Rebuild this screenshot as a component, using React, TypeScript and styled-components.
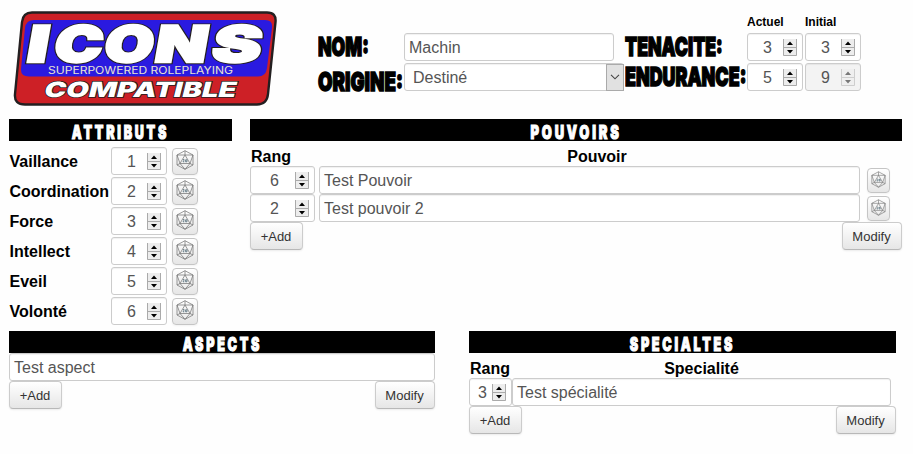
import React from 'react';
import styled, { createGlobalStyle } from 'styled-components';

const Global = createGlobalStyle`
  * { box-sizing: border-box; }
  body { margin: 0; background: #fefefe; color: #000; font: 16px/20px "Liberation Sans", Arial, sans-serif; overflow: hidden; }
`;

const Sheet = styled.main`
  width: 913px;
  height: 454px;
  padding: 11px 0 0 9px;
`;

const Header = styled.header`
  display: flex;
  height: 108px;
`;

const LogoArt = styled.svg`
  display: block;
  width: 264px;
  height: 96px;
  margin: 0 44px 0 4px;
  flex: none;
`;

const Fields = styled.div`
  display: grid;
  grid-template-columns: 83px 222px 121px 58px 58px;
  grid-template-rows: 22px 30px 30px;
`;

const Caption = styled.b`
  font-size: 12px;
  line-height: 22px;
`;

const Poster = styled.span<{ $size: number; $stretch: number; $gap?: number; $ink?: number }>`
  display: inline-block;
  white-space: nowrap;
  font-family: Inter, "Liberation Sans", sans-serif;
  font-weight: 900;
  font-size: ${p => p.$size}px;
  letter-spacing: ${p => p.$gap ?? 0}px;
  transform: scaleX(${p => p.$stretch});
  -webkit-text-stroke: ${p => p.$ink ?? 1.5}px currentColor;
`;

const FieldLabel = styled.div<{ $drop?: number; $shift?: number }>`
  width: 0;
  line-height: 28px;
  padding-top: ${p => p.$drop ?? 0}px;
  margin-left: ${p => p.$shift ?? -3}px;
  & > span { transform-origin: left; }
`;

const Box = styled.div<{ $w: number; $off?: boolean; $indent?: number }>`
  display: flex;
  align-items: center;
  flex: none;
  width: ${p => p.$w}px;
  height: 28px;
  padding: 1px 0 0 ${p => p.$indent ?? 4}px;
  border: 1px solid #ccc;
  border-radius: 3px;
  background: ${p => (p.$off ? '#f3f3f3' : '#fff')};
  color: #555;
  box-shadow: inset 0 1px 1px rgba(0, 0, 0, 0.06);
`;

const NumberBox = styled(Box)`
  justify-content: flex-end;
  padding: 1px 5px 0 0;
  gap: ${p => (p.$w < 50 ? 5 : p.$w > 60 ? 16 : 11)}px;
`;

const Arrows = styled.svg<{ $off?: boolean }>`
  width: 14px;
  height: 17px;
  margin-top: -1px;
  opacity: ${p => (p.$off ? 0.5 : 1)};
`;

const Picker = styled(Box)`
  justify-content: space-between;
`;

const PickerArrow = styled.span`
  display: flex;
  align-items: center;
  justify-content: center;
  width: 18px;
  height: 27px;
  margin: -1px -1px 0 0;
  border: 1px solid #aaa;
  background: #e1e1e1;
`;

const TopRow = styled.div`
  display: flex;
  gap: 18px;
  height: 212px;
`;

const BottomRow = styled.div`
  display: flex;
  gap: 34px;
`;

const Panel = styled.section<{ $w: number }>`
  width: ${p => p.$w}px;
`;

const Banner = styled.h2`
  margin: 0;
  height: 22px;
  line-height: 23px;
  background: #000;
  color: #fff;
  text-align: center;
`;

const AttributeList = styled.div`
  padding-top: 6px;
`;

const AttributeRow = styled.div`
  display: grid;
  grid-template-columns: 102px 61px 26px;
  height: 30px;
`;

const AttributeName = styled.b`
  padding-left: 0.5px;
  line-height: 29px;
  white-space: nowrap;
`;

const DieButton = styled.button<{ $w: number; $h: number }>`
  display: flex;
  align-items: center;
  justify-content: center;
  flex: none;
  width: ${p => p.$w}px;
  height: ${p => p.$h}px;
  margin: 1px 0 0;
  padding: 0 0 3px;
  border: 1px solid #c5c5c5;
  border-radius: 4px;
  background: linear-gradient(#fff, #e6e6e6);
  box-shadow: 0 1px 2px rgba(0, 0, 0, 0.05);
`;

const Columns = styled.div<{ $h: number; $first: number; $last: number }>`
  display: grid;
  grid-template-columns: ${p => p.$first}px 1fr ${p => p.$last}px;
  height: ${p => p.$h}px;
  padding: 6px 0 0 1px;
  font-weight: bold;
  & > :nth-child(2) { text-align: center; }
`;

const Entry = styled.div<{ $gap?: number }>`
  display: flex;
  gap: ${p => p.$gap ?? 0}px;
  height: 28px;
`;

const DieSlot = styled.div`
  padding: 1px 0 0 3px;
`;

const Actions = styled.div`
  display: flex;
  justify-content: space-between;
`;

const Action = styled.button<{ $w: number }>`
  width: ${p => p.$w}px;
  height: 28px;
  padding: 2px 1px 0 0;
  border: 1px solid #ccc;
  border-bottom-color: #b8b8b8;
  border-radius: 4px;
  background: linear-gradient(#fff, #e6e6e6);
  box-shadow: 0 1px 2px rgba(0, 0, 0, 0.08);
  color: #333;
  font: 13px/20px "Liberation Sans", Arial, sans-serif;
`;

function Num({ value, w = 56, off }: { value: number; w?: number; off?: boolean }) {
  return (
    <NumberBox $w={w} $off={off}>
      {value}
      <Arrows viewBox="0 0 14 17" $off={off}>
        <path d="M0 0h14v17H0z" fill="#ededed" />
        <path d="M.5 0v16.5h13V0M0 8.5h14" fill="none" stroke="#aaa" />
        <path d="M7 2.500 10 6H4zM4 11h6L7 14.500z" fill="#000" />
      </Arrows>
    </NumberBox>
  );
}

function Die({ small }: { small?: boolean }) {
  return (
    <DieButton $w={small ? 23 : 26} $h={small ? 25 : 27}>
      <svg width={small ? 15 : 18} height={small ? 17 : 20} viewBox="0 0 18 20" fill="none" stroke="#777" strokeWidth=".75" strokeLinejoin="round">
        <path d="M9 .7 17 5v10l-8 4.300L1 15V5z" />
        <path d="M9 5 4 13.500h10zM9 .7V5M9 5 1 5l3 8.500L1 15M9 5h8l-3 8.500 3 1.500M4 13.500l5 5.800 5-5.800" />
        <path d="M7 9.800q1.300-1.100 1.200.2L7 11.800h1.300M9.600 9.800h1.400v2H9.600z" stroke="#496471" />
      </svg>
    </DieButton>
  );
}

function Buttons() {
  return (
    <Actions>
      <Action $w={53}>+Add</Action>
      <Action $w={60}>Modify</Action>
    </Actions>
  );
}

const logoLetters = [
  { glyph: 'I', x: 25, width: 21 },
  { glyph: 'C', x: 52, width: 48 },
  { glyph: 'O', x: 102, width: 49 },
  { glyph: 'N', x: 153, width: 52 },
  { glyph: 'S', x: 210, width: 49 },
];

function Logo() {
  return (
    <LogoArt viewBox="13 11 264 96" role="img" aria-label="Icons superpowered roleplaying compatible">
      <path d="M32 12.500H267Q276.500 12.500 275.500 22L268 94Q267 104.500 257 104.500H25Q14 104.500 15 94L22 22Q23 12.500 32 12.500Z" fill="#cd2026" stroke="#231f20" strokeWidth="2.400" />
      <path d="M34 20H265Q273 20 272 28L267 68Q266 76.500 258 76.500H29Q20.500 76.500 21 69L25 28Q26 20 34 20Z" fill="#2a1ae0" />
      {[{ ink: '#231f20', stroke: 4.5 }, { ink: '#fff', stroke: 2.6 }].map(layer => (
        <g key={layer.ink} fill={layer.ink} stroke={layer.ink} strokeWidth={layer.stroke} fontFamily="Inter, Liberation Sans, sans-serif" fontWeight="900" fontSize="50" aria-hidden={layer.ink !== '#fff'}>
          {logoLetters.map(l => (
            <g key={l.glyph} transform={`translate(${l.x} 61.500) skewX(-10)`}>
              <text textLength={l.width} lengthAdjust="spacingAndGlyphs">{l.glyph}</text>
            </g>
          ))}
        </g>
      ))}
      <g transform="translate(43 96.500) skewX(-14)" fontFamily="Inter, Liberation Sans, sans-serif" fontWeight="900" fontSize="21" fill="#fff" stroke="#231f20" strokeWidth="1.500" paintOrder="stroke">
        <text textLength="192" lengthAdjust="spacingAndGlyphs">COMPATIBLE</text>
      </g>
      <text x="48" y="73.500" textLength="185" lengthAdjust="spacingAndGlyphs" fontFamily="Inter, sans-serif" fontSize="9.800" fill="#e8e3d0">SUPERPOWERED ROLEPLAYING</text>
    </LogoArt>
  );
}

const attributes: [string, number][] = [
  ['Vaillance', 1], ['Coordination', 2], ['Force', 3], ['Intellect', 4], ['Eveil', 5], ['Volonté', 6],
];
const powers: [number, string][] = [[6, 'Test Pouvoir'], [2, 'Test pouvoir 2']];

function Title({ children, stretch = 0.68 }: { children: string; stretch?: number }) {
  return <Banner><Poster $size={18.5} $stretch={stretch} $gap={4} $ink={1.1}>{children}</Poster></Banner>;
}

export default function App() {
  return (
    <>
      <Global />
      <Sheet>
        <Header>
          <Logo />
          <Fields>
            <span /><span /><span />
            <Caption>Actuel</Caption>
            <Caption>Initial</Caption>
            <FieldLabel><Poster $size={26} $stretch={0.68}>NOM:</Poster></FieldLabel>
            <Box $w={210}>Machin</Box>
            <FieldLabel $shift={-1}><Poster $size={26} $stretch={0.68}>TENACITE:</Poster></FieldLabel>
            <Num value={3} />
            <Num value={3} />
            <FieldLabel $drop={5}><Poster $size={26} $stretch={0.72}>ORIGINE:</Poster></FieldLabel>
            <Picker $w={220} $indent={8}>
              Destiné
              <PickerArrow>
                <svg width="10" height="6" viewBox="0 0 10 6"><path d="m1 .8 4 4 4-4" fill="none" stroke="#444" strokeWidth="1.100" /></svg>
              </PickerArrow>
            </Picker>
            <FieldLabel $shift={-1}><Poster $size={26} $stretch={0.687}>ENDURANCE:</Poster></FieldLabel>
            <Num value={5} />
            <Num value={9} off />
          </Fields>
        </Header>

        <TopRow>
          <Panel $w={223}>
            <Title>ATTRIBUTS</Title>
            <AttributeList>
              {attributes.map(([name, value]) => (
                <AttributeRow key={name}>
                  <AttributeName>{name}</AttributeName>
                  <Num value={value} />
                  <Die />
                </AttributeRow>
              ))}
            </AttributeList>
          </Panel>
          <Panel $w={652}>
            <Title stretch={0.7}>POUVOIRS</Title>
            <Columns $h={25} $first={75} $last={34}><span>Rang</span><span>Pouvoir</span></Columns>
            {powers.map(([rank, name]) => (
              <Entry key={name} $gap={4}>
                <Num value={rank} w={65} />
                <Box $w={541}>{name}</Box>
                <DieSlot><Die small /></DieSlot>
              </Entry>
            ))}
            <Buttons />
          </Panel>
        </TopRow>

        <BottomRow>
          <Panel $w={426}>
            <Title>ASPECTS</Title>
            <Entry><Box $w={426}>Test aspect</Box></Entry>
            <Buttons />
          </Panel>
          <Panel $w={427}>
            <Title>SPECIALTES</Title>
            <Columns $h={25} $first={41} $last={4}><span>Rang</span><span>Specialité</span></Columns>
            <Entry>
              <Num value={3} w={43} />
              <Box $w={379}>Test spécialité</Box>
            </Entry>
            <Buttons />
          </Panel>
        </BottomRow>
      </Sheet>
    </>
  );
}
